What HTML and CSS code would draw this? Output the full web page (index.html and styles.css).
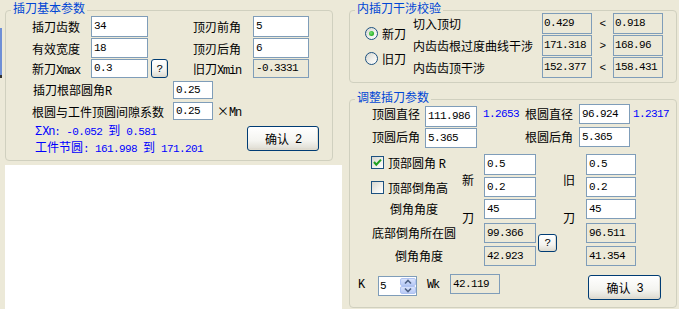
FILE: index.html
```html
<!DOCTYPE html>
<html>
<head>
<meta charset="utf-8">
<link rel="stylesheet" href="styles.css">
</head>
<body>
<div class="edge"></div>
<div class="win">
  <div class="col-left">
    <div class="group g1">
      <span class="gtitle">插刀基本参数</span>
      <div class="row lr1">
        <span class="lbl w59">插刀齿数</span><span class="box m w57 h21">34</span>
        <span class="lbl w60 ml45">顶刃前角</span><span class="box m w56 h21">5</span>
      </div>
      <div class="row lr2">
        <span class="lbl w59">有效宽度</span><span class="box m w57 h20">18</span>
        <span class="lbl w60 ml45">顶刃后角</span><span class="box m w56 h20">6</span>
      </div>
      <div class="row lr3">
        <span class="lbl w59">新刀<span class="ml">Xmax</span></span><span class="box m w57 h19">0.3</span>
        <span class="btn qbtn m">?</span>
        <span class="lbl w60 ml25">旧刀<span class="ml">Xmin</span></span><span class="box dis m w56 h19">-0.3331</span>
      </div>
      <div class="row lr4">
        <span class="lbl w140">插刀根部圆角<span class="ml">R</span></span><span class="box m w40 h18">0.25</span>
      </div>
      <div class="row lr5">
        <span class="lbl w141">根圆与工件顶圆间隙系数</span><span class="box m w40 h18">0.25</span>
        <span class="lbl ml4">×<span class="ml">Mn</span></span>
      </div>
      <div class="lr6">
        <div class="blue-col">
          <div class="bl t1">Σ<span class="ml">Xn</span><span class="m">: -0.052 </span>到<span class="m"> 0.581</span></div>
          <div class="bl t2">工件节圆<span class="m">: 161.998 </span>到<span class="m"> 171.201</span></div>
        </div>
        <span class="btn okbtn"><span>确认<span class="ml bd">&nbsp;2</span></span></span>
      </div>
    </div>
    <div class="white"></div>
  </div>

  <div class="col-right">
    <div class="group g2">
      <span class="gtitle">内插刀干涉校验</span>
      <div class="radios">
        <div class="rrow r-first"><span class="radio on"></span><span class="rlbl">新刀</span></div>
        <div class="rrow r-second"><span class="radio"></span><span class="rlbl">旧刀</span></div>
      </div>
      <div class="chkgrid">
        <span class="lbl">切入顶切</span><span class="box dis m">0.429</span><span class="sym m">&lt;</span><span class="box dis m">0.918</span>
        <span class="lbl">内齿齿根过度曲线干涉</span><span class="box dis m">171.318</span><span class="sym m">&gt;</span><span class="box dis m">168.96</span>
        <span class="lbl">内齿齿顶干涉</span><span class="box dis m">152.377</span><span class="sym m">&lt;</span><span class="box dis m">158.431</span>
      </div>
    </div>

    <div class="group g3">
      <span class="gtitle">调整插刀参数</span>
      <div class="ra">
        <span class="lbl w53 l20">顶圆直径</span><span class="box m w52 h21 mt2">111.986</span>
        <span class="bv m w42 ml6">1.2653</span>
        <span class="lbl w54 l20">根圆直径</span><span class="box m w51 h20">96.924</span>
        <span class="bv m ml3">1.2317</span>
      </div>
      <div class="rb">
        <span class="lbl w53 l20">顶圆后角</span><span class="box m w52 h20 mt1">5.365</span>
        <span class="sp48"></span>
        <span class="lbl w54 l20">根圆后角</span><span class="box m w51 h20">5.365</span>
      </div>
      <div class="cg">
        <div class="c-l c-l1"><span class="chk"><svg width="11" height="11" viewBox="0 0 11 11"><polyline points="2,5 4.3,7.6 9,2.6" fill="none" stroke="#21A121" stroke-width="2.1"/></svg></span><span class="clbl">顶部圆角 <span class="ml">R</span></span></div>
        <span class="box m cin r1 c3">0.5</span>
        <span class="box m cin r1 c6">0.5</span>

        <div class="c-l c-l2"><span class="chk"></span><span class="clbl">顶部倒角高</span></div>
        <span class="box m cin r2 c3">0.2</span>
        <span class="box m cin r2 c6">0.2</span>

        <div class="c-l c-l3">倒角角度</div>
        <span class="box m cin r3 c3">45</span>
        <span class="box m cin r3 c6">45</span>

        <div class="c-l c-l4">底部倒角所在圆</div>
        <span class="box dis m cin r4 c3">99.366</span>
        <span class="btn qbtn2 m">?</span>
        <span class="box dis m cin r4 c6">96.511</span>

        <div class="c-l c-l5">倒角角度</div>
        <span class="box dis m cin r5 c3">42.923</span>
        <span class="box dis m cin r5 c6">41.354</span>

        <div class="ch ch2"><span>新</span><span class="ch-b">刀</span></div>
        <div class="ch ch5"><span>旧</span><span class="ch-b">刀</span></div>
      </div>
      <div class="rh">
        <span class="kl ml">K</span>
        <span class="spin"><span class="spin-t m">5</span><span class="spin-b"><span class="sb"><svg width="14" height="8" viewBox="0 0 14 8"><polyline points="4,5.5 7,2.5 10,5.5" fill="none" stroke="#4D6185" stroke-width="1.6"/></svg></span><span class="sb"><svg width="14" height="8" viewBox="0 0 14 8"><polyline points="4,2.5 7,5.5 10,2.5" fill="none" stroke="#4D6185" stroke-width="1.6"/></svg></span></span></span>
        <span class="wk ml">Wk</span>
        <span class="box dis m w50 h20">42.119</span>
        <span class="btn okbtn3"><span>确认<span class="ml bd">&nbsp;3</span></span></span>
      </div>
    </div>
  </div>
</div>
</body>
</html>
```

FILE: styles.css
```css
* { box-sizing: border-box; }
html, body { margin: 0; padding: 0; }
body {
  background: #ECE9D8;
  width: 679px;
  height: 309px;
  overflow: hidden;
  position: relative;
  font-family: "Noto Sans CJK SC", "Liberation Sans", sans-serif;
  font-size: 12px;
  color: #000;
}
.m {
  font-family: "Liberation Mono", "DejaVu Sans Mono", monospace;
  font-size: 11px;
  letter-spacing: -0.6px;
}
.ml {
  font-family: "Liberation Mono", "DejaVu Sans Mono", monospace;
  font-size: 12px;
  letter-spacing: -1.2px;
}
.bd { vertical-align: 1px; }
.edge {
  position: absolute;
  left: 0;
  top: 28px;
  width: 2px;
  height: 50px;
  background: #6F8FD6;
  border-bottom: 3px solid #333;
}
.win { display: flex; height: 309px; }
.col-left { width: 345px; display: flex; flex-direction: column; }
.col-right { width: 334px; display: flex; flex-direction: column; padding-left: 4px; }

.group {
  position: relative;
  border: 1px solid #D0D0BF;
  border-radius: 4px;
  width: 328px;
}
.gtitle {
  position: absolute;
  left: 5px;
  top: -10px;
  padding: 0 2px;
  background: #ECE9D8;
  color: #0046D5;
  line-height: 14px;
  white-space: nowrap;
}

.row { display: flex; align-items: center; }
.lbl { white-space: nowrap; display: inline-block; }
.w59 { width: 59px; } .w60 { width: 60px; } .w57 { width: 57px; } .w56 { width: 56px; }
.w140 { width: 140px; } .w141 { width: 141px; } .w40 { width: 40px; }
.w53 { width: 53px; } .w54 { width: 54px; } .w52 { width: 52px; } .w51 { width: 51px; }
.w50 { width: 50px; } .w42 { width: 42px; }
.h21 { height: 21px; } .h20 { height: 20px; } .h19 { height: 19px; } .h18 { height: 18px; }
.ml45 { margin-left: 45px; } .ml25 { margin-left: 25px; } .ml4 { margin-left: 4px; }
.ml6 { margin-left: 6px; } .ml3 { margin-left: 3px; }
.mt2 { margin-top: 2px; } .mt1 { margin-top: 1px; }
.l20 { height: 20px; line-height: 20px; }

.box {
  display: flex;
  align-items: center;
  border: 1px solid #7F9DB9;
  background: #fff;
  padding: 0 0 1px 2px;
  white-space: nowrap;
  overflow: hidden;
}
.box.dis { background: #ECE9D8; }

.btn {
  display: flex;
  align-items: center;
  justify-content: center;
  border: 1px solid #003C74;
  border-radius: 3px;
  background: linear-gradient(#FFFFFF 0%, #F4F4F0 60%, #E3E1D8 90%, #D6D0C5 100%);
  box-shadow: inset -1px -1px 0 #E0DCCF;
  white-space: nowrap;
}

/* left group */
.g1 { margin: 10px 0 0 5px; height: 151px; padding-top: 5px; }
.lr1 { height: 21px; padding-left: 26px; }
.lr2 { height: 20px; padding-left: 26px; margin-top: 1px; }
.lr3 { height: 19px; padding-left: 26px; margin-top: 1px; }
.qbtn { width: 17px; height: 19px; margin-left: 3px; font-size: 11px; }
.lr4 { height: 18px; padding-left: 27px; margin-top: 3px; }
.lr5 { height: 18px; padding-left: 26px; margin-top: 3px; }
.lr6 { display: flex; align-items: flex-start; padding-left: 29px; margin-top: 1px; }
.blue-col { width: 212px; color: #0000FF; }
.bl { white-space: nowrap; }
.t1 { height: 17px; line-height: 17px; }
.t2 { height: 18px; line-height: 18px; }
.okbtn { width: 72px; height: 25px; margin-top: 5px; padding-bottom: 1px; }

.white { margin: 4px 0 0 5px; width: 337px; flex: 1; background: #fff; }

/* group 2 */
.g2 { margin-top: 10px; height: 73px; display: flex; }
.radios { width: 63px; padding-left: 15px; display: flex; flex-direction: column; }
.rrow { display: flex; align-items: center; height: 13px; }
.r-first { margin-top: 16px; }
.r-second { margin-top: 12px; }
.radio {
  width: 13px;
  height: 13px;
  border-radius: 50%;
  border: 1px solid #1C5180;
  background: linear-gradient(135deg, #D6D6CF 0%, #F2F2EE 60%, #FFFFFF 100%);
  display: flex;
  align-items: center;
  justify-content: center;
  flex: none;
}
.radio.on::after {
  content: "";
  width: 5px;
  height: 5px;
  border-radius: 50%;
  background: radial-gradient(circle at 40% 40%, #7BE278 0%, #2FB52B 60%, #1E9A1A 100%);
}
.rlbl { margin-left: 4px; line-height: 13px; }
.chkgrid {
  margin-top: 2px;
  display: grid;
  grid-template-columns: 129px 50px 21px 50px;
  grid-auto-rows: 21px;
  row-gap: 1px;
  align-items: center;
}
.chkgrid .box { height: 21px; padding-left: 1px; }
.sym { text-align: center; }

/* group 3 */
.g3 { margin-top: 16px; height: 209px; padding-top: 4px; }
.ra { display: flex; align-items: flex-start; height: 23px; padding-left: 22px; }
.rb { display: flex; align-items: flex-start; height: 21px; padding-left: 22px; }
.bv { color: #0000FF; height: 20px; line-height: 20px; white-space: nowrap; }
.sp48 { width: 48px; }

.cg {
  margin-top: 6px;
  display: grid;
  grid-template-columns: 112px 22px 52px 27px 23px 50px;
  grid-template-rows: 22px 22px 23px 23px 22px;
}
.c-l { display: flex; align-items: center; white-space: nowrap; grid-column: 1; }
.c-l1 { grid-row: 1; padding-left: 21px; align-self: start; height: 17px; }
.c-l2 { grid-row: 2; padding-left: 21px; align-self: center; }
.c-l3 { grid-row: 3; padding-left: 40px; align-self: start; height: 20px; }
.c-l4 { grid-row: 4; padding-left: 22px; align-self: center; }
.c-l5 { grid-row: 5; padding-left: 45px; align-self: center; }
.chk {
  width: 13px;
  height: 13px;
  border: 1px solid #1C5180;
  background: linear-gradient(135deg, #D6D6CF 0%, #F2F2EE 60%, #FFFFFF 100%);
  flex: none;
  display: flex;
}
.clbl { margin-left: 4px; }
.cin { align-self: start; height: 20px; }
.r1 { grid-row: 1; height: 21px; }
.r2 { grid-row: 2; margin-top: 1px; }
.r3 { grid-row: 3; margin-top: 1px; }
.r4 { grid-row: 4; margin-top: 2px; }
.r5 { grid-row: 5; margin-top: 2px; }
.c3 { grid-column: 3; }
.c6 { grid-column: 6; }
.qbtn2 { grid-column: 4; grid-row: 4 / 6; align-self: start; width: 19px; height: 18px; margin: 13px 0 0 2px; font-size: 11px; }
.ch { grid-row: 1 / 4; display: flex; flex-direction: column; padding-top: 20px; line-height: 12px; }
.ch2 { grid-column: 2; }
.ch5 { grid-column: 5; }
.ch-b { margin-top: 26px; }

.rh { display: flex; align-items: flex-start; height: 25px; padding-left: 8px; margin-top: 8px; }
.kl { width: 20px; line-height: 22px; }
.wk { width: 23px; margin-left: 10px; line-height: 22px; }
.spin {
  width: 39px;
  height: 20px;
  margin-top: 2px;
  border: 1px solid #7F9DB9;
  background: #fff;
  display: flex;
}
.spin-t { flex: 1; padding-left: 1px; display: flex; align-items: center; padding-bottom: 1px; }
.spin-b { width: 16px; display: flex; flex-direction: column; padding: 1px 0; gap: 0; }
.sb {
  flex: 1;
  display: flex;
  align-items: center;
  justify-content: center;
  background: linear-gradient(#D8E2FC, #B8CAF5);
  border: 1px solid #B0C3F2;
  border-radius: 2px;
  overflow: hidden;
}
.okbtn3 { width: 73px; height: 25px; margin-left: 88px; margin-top: 1px; padding-bottom: 1px; }
```
